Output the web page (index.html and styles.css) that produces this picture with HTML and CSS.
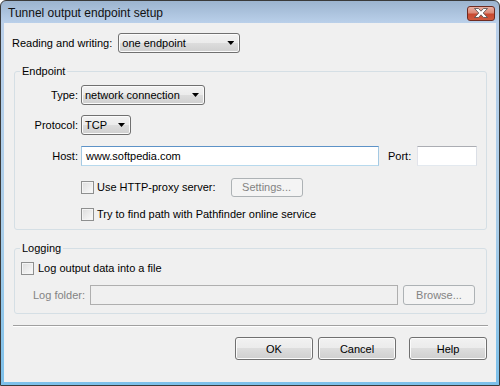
FILE: index.html
```html
<!DOCTYPE html>
<html lang="en">
<head>
  <meta charset="UTF-8" />
  <title>Tunnel output endpoint setup</title>
  <link rel="stylesheet" href="styles.css">
</head>
<body>
  <div class="window">
    <div class="titlebar">
      <span class="title">Tunnel output endpoint setup</span>
      <button class="close-btn" title="Close">
        <svg width="14" height="10" viewBox="0 0 14 10">
          <polygon points="0.5,0.5 4.5,0.5 7,3.2 9.5,0.5 13.5,0.5 9.2,5 13.5,9.5 9.5,9.5 7,6.8 4.5,9.5 0.5,9.5 4.8,5" fill="#fff" stroke="#4b4b4b" stroke-width="0.8"/>
        </svg>
      </button>
    </div>

    <div class="client">
      <div class="mode-row">
        <span>Reading and writing:</span>
        <div class="combo combo-mode"><span>one endpoint</span><i class="arrow"></i></div>
      </div>

      <!-- Endpoint group -->
      <fieldset class="group endpoint">
        <legend>Endpoint</legend>
        <div class="field">
          <span class="field-label">Type:</span>
          <div class="combo combo-type"><span>network connection</span><i class="arrow"></i></div>
        </div>
        <div class="field proto-row">
          <span class="field-label">Protocol:</span>
          <div class="combo combo-proto"><span>TCP</span><i class="arrow"></i></div>
        </div>
        <div class="field host-row">
          <span class="field-label">Host:</span>
          <div class="text-input host focused">www.softpedia.com</div>
          <span class="port-label">Port:</span>
          <div class="text-input port"></div>
        </div>
        <div class="field check-row proxy-row">
          <span class="check"></span>
          <span>Use HTTP-proxy server:</span>
          <button class="btn settings" disabled>Settings...</button>
        </div>
        <div class="field check-row path-row">
          <span class="check"></span>
          <span>Try to find path with Pathfinder online service</span>
        </div>
      </fieldset>

      <!-- Logging group -->
      <fieldset class="group logging">
        <legend>Logging</legend>
        <div class="log-check">
          <span class="check"></span>
          <span>Log output data into a file</span>
        </div>
        <div class="folder-row">
          <span class="muted">Log folder:</span>
          <div class="text-input folder disabled"></div>
          <button class="btn browse" disabled>Browse...</button>
        </div>
      </fieldset>

      <div class="separator"></div>

      <div class="actions">
        <button class="btn action ok">OK</button>
        <button class="btn action cancel">Cancel</button>
        <button class="btn action">Help</button>
      </div>
    </div>
  </div>
</body>
</html>
```

FILE: styles.css
```css
* {
  box-sizing: border-box;
}

body {
  margin: 0;
  background: #fff;
  color: #000;
  font-family: "Liberation Sans", Arial, sans-serif;
  font-size: 11px;
}

.window {
  width: 500px;
  height: 386px;
  border: 1px solid #3a3a3a;
  border-radius: 6px 6px 0 0;
  padding: 0 3px 3px;
  background: linear-gradient(to bottom, #9cb4cf 0, #bad0ea 22px, #a9cde9 60%, #7cc0ea 100%);
  display: flex;
  flex-direction: column;
}

.titlebar {
  height: 22px;
  display: flex;
  align-items: center;
  justify-content: space-between;
  padding: 1px 1px 0 4px;
}

.title {
  font-size: 12px;
  color: #111;
}

.close-btn {
  width: 28px;
  height: 15px;
  padding: 0;
  margin-top: 1px;
  border: 1px solid #6e2b21;
  border-radius: 3px;
  background: linear-gradient(to bottom, #eab0a3 0%, #dc8a78 45%, #c8482f 55%, #cf5a3f 100%);
  display: flex;
  align-items: center;
  justify-content: center;
}

.client {
  flex: 1;
  background: #f0f0f0;
  padding: 10px 9px 0 8px;
  display: flex;
  flex-direction: column;
}

.mode-row {
  display: flex;
  align-items: center;
  height: 20px;
  gap: 6px;
}

/* combo boxes and buttons */
.combo,
.btn {
  font: inherit;
  color: #000;
  border: 1px solid #707070;
  border-radius: 3px;
  background: linear-gradient(to bottom, #f2f2f2 0%, #ebebeb 50%, #dddddd 50%, #cfcfcf 100%);
  box-shadow: inset 0 0 0 1px #fbfbfb;
}

.combo {
  height: 20px;
  display: flex;
  align-items: center;
  justify-content: space-between;
  padding: 0 5px 0 3px;
}

.combo-mode {
  width: 122px;
}

.combo-type {
  width: 124px;
}

.combo-proto {
  width: 50px;
}

.arrow {
  width: 7px;
  height: 4px;
  background: #000;
  clip-path: polygon(0 0, 100% 0, 50% 100%);
}

.btn {
  height: 23px;
  padding: 0;
}

.btn:disabled {
  color: #838383;
  border-color: #adb2b5;
  background: #f4f4f4;
  box-shadow: none;
}

/* group boxes */
.group {
  margin: 12px 0 0 2px;
  min-width: 0;
  border: 1px solid #d5dfe5;
  border-radius: 3px;
  padding: 7px 0 5px 0;
}

.group legend {
  margin-left: 5px;
  padding: 0 2px;
  line-height: 13px;
}

.field {
  display: flex;
  align-items: center;
  height: 20px;
}

.field-label {
  width: 66px;
  padding-right: 3px;
  text-align: right;
}

.proto-row {
  margin-top: 10px;
}

.host-row {
  margin-top: 11px;
}

.proxy-row {
  margin-top: 11px;
}

.path-row {
  margin-top: 7px;
}

.check-row {
  padding-left: 66px;
}

.check {
  width: 13px;
  height: 13px;
  margin-right: 3px;
  border: 1px solid #8e8f8f;
  background: linear-gradient(to bottom right, #dcdcdc, #fbfbfb);
  box-shadow: inset 0 0 0 1px #f4f4f4;
  flex-shrink: 0;
}

.text-input {
  height: 20px;
  background: #fff;
  border: 1px solid;
  border-color: #abadb3 #dbdfe6 #e3e9ef #e2e3ea;
  padding: 0 4px;
  display: flex;
  align-items: center;
}

.text-input.focused {
  border-color: #5d92c7 #a4c9e3 #b7d9ed #a4c9e3;
}

.text-input.disabled {
  background: #f0f0f0;
  border-color: #afafaf;
}

.host {
  width: 298px;
}

.port-label {
  margin: 0 6px 0 9px;
}

.port {
  width: 60px;
}

.settings {
  width: 72px;
  height: 19px;
  margin-left: 15px;
}

.log-check {
  display: flex;
  align-items: center;
  height: 16px;
  margin-left: 6px;
  gap: 1px;
}

.folder-row {
  display: flex;
  align-items: center;
  height: 20px;
  margin-top: 9px;
  padding-left: 18px;
}

.muted {
  color: #838383;
}

.folder {
  width: 308px;
  margin-left: 5px;
}

.browse {
  width: 72px;
  height: 20px;
  margin-left: 5px;
}

.logging {
  padding: 5px 0 8px 0;
}

.separator {
  margin: 11px -1px 0 1px;
  border-top: 1px solid #a0a0a0;
  border-bottom: 1px solid #fff;
}

.actions {
  display: flex;
  justify-content: flex-end;
  margin-top: 10px;
}

.action {
  width: 78px;
}

.ok {
  margin-right: 5px;
}

.cancel {
  margin-right: 13px;
}
```
